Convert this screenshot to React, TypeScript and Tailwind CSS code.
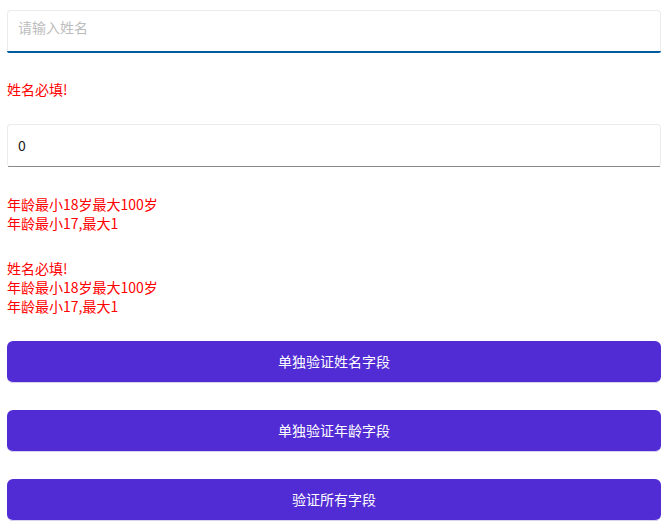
const font = { fontFamily: '"Noto Sans CJK SC", "Noto Sans", sans-serif' }

function ErrorBlock({ lines, className }: { lines: string[]; className?: string }) {
  return (
    <div className={`text-[14px] leading-[19px] text-[#ff0000] ${className ?? ''}`}>
      {lines.map((l, i) => (
        <div key={i}>{l}</div>
      ))}
    </div>
  )
}

function ActionButton({ label, className }: { label: string; className?: string }) {
  return (
    <button
      type="button"
      className={`h-[42px] w-full rounded-[6px] border-b border-[#d8d2f0] bg-[#512bd4] text-[14px] text-white ${className ?? ''}`}
    >
      {label}
    </button>
  )
}

export default function App() {
  return (
    <div className="min-h-[532px] bg-white pl-[7px] pr-[8px] pt-[10px]" style={font}>
      {/* Name entry (focused) */}
      <div className="flex h-[43px] flex-col rounded-[4px] border border-b-0 border-[#ebebeb] bg-white">
        <input
          placeholder="请输入姓名"
          className="mt-[7px] h-[19px] w-full bg-transparent px-[10px] text-[14px] leading-[19px] text-black outline-none placeholder:text-[#bdbdbd]"
        />
        <div className="-mx-px mt-auto h-[2px] rounded-b-[2px] bg-[#005a9e]" />
      </div>

      <ErrorBlock lines={['姓名必填!']} className="mt-[27px]" />

      {/* Age entry */}
      <div className="mt-[25px] flex h-[43px] flex-col rounded-[4px] border border-b-0 border-[#ebebeb] bg-white">
        <input
          defaultValue="0"
          className="mt-[11px] h-[19px] w-full bg-transparent px-[10px] text-[14px] leading-[19px] text-[#1a1a1a] outline-none"
        />
        <div className="mt-auto h-px bg-[#8a8a8a]" />
      </div>

      <ErrorBlock lines={['年龄最小18岁最大100岁', '年龄最小17,最大1']} className="mt-[28px]" />

      <ErrorBlock
        lines={['姓名必填!', '年龄最小18岁最大100岁', '年龄最小17,最大1']}
        className="mt-[26px]"
      />

      <div className="mt-[25px] flex flex-col gap-[27px]">
        <ActionButton label="单独验证姓名字段" />
        <ActionButton label="单独验证年龄字段" />
        <ActionButton label="验证所有字段" />
      </div>
    </div>
  )
}
